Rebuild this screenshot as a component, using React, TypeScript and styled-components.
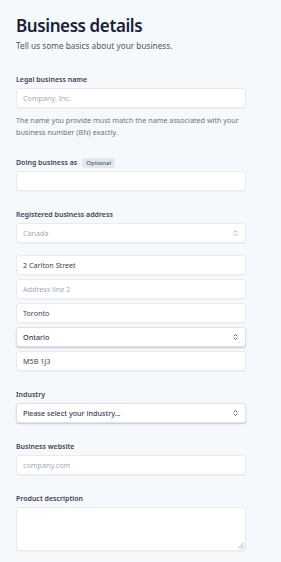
import * as React from 'react';
import styled, { createGlobalStyle } from 'styled-components';

const GlobalStyle = createGlobalStyle`
  html, body {
    margin: 0;
    padding: 0;
    background: #f6f9fc;
  }
  body {
    font-family: 'Noto Sans', 'Open Sans', sans-serif;
  }
`;

const Page = styled.div`
  width: 281px;
  min-height: 562px;
  box-sizing: border-box;
  padding: 14px 35px 0 16px;
  background: #f6f9fc;
`;

const Title = styled.h1`
  margin: 0;
  font-size: 17px;
  line-height: 24px;
  font-weight: 600;
  letter-spacing: -0.4px;
  color: #1a1f36;
`;

const Subtitle = styled.p`
  margin: 2px 0 22px;
  font-size: 8.25px;
  line-height: 12px;
  color: #4f566b;
`;

const Section = styled.div`
  display: flex;
  flex-direction: column;
  margin-bottom: 18px;
`;

const LabelRow = styled.div`
  display: flex;
  align-items: center;
  gap: 5px;
  height: 10px;
  margin: 1px 0 3px;
`;

const Label = styled.label`
  font-size: 7px;
  line-height: 10px;
  font-weight: 600;
  color: #3c4257;
`;

const Badge = styled.span`
  display: inline-flex;
  align-items: center;
  height: 10px;
  padding: 0 4px;
  border-radius: 3px;
  background: #e3e8ee;
  color: #4f566b;
  font-size: 6px;
  font-weight: 500;
`;

const Field = styled.div<{ $raised?: boolean; $gapTop?: number }>`
  display: flex;
  align-items: center;
  height: 20px;
  box-sizing: border-box;
  margin-top: ${p => p.$gapTop ?? 0}px;
  padding: 0 7px 0 6px;
  background: #ffffff;
  border: 1px solid ${p => (p.$raised ? '#dfe3e8' : '#e6ebf1')};
  border-radius: 3px;
  box-shadow: ${p =>
    p.$raised
      ? '0 1px 2px rgba(60, 66, 87, 0.2), 0 1px 1px rgba(0, 0, 0, 0.06)'
      : '0 1px 1px rgba(0, 0, 0, 0.03)'};
`;

const Value = styled.span<{ $muted?: boolean; $strong?: boolean }>`
  flex: 1;
  font-size: 7.2px;
  line-height: 10px;
  color: ${p => (p.$muted ? '#a3acb9' : '#3c4257')};
  font-weight: ${p => (p.$strong ? 500 : 400)};
`;

const TextArea = styled.div`
  position: relative;
  height: 44px;
  box-sizing: border-box;
  background: #ffffff;
  border: 1px solid #e6ebf1;
  border-radius: 3px;
  box-shadow: 0 1px 1px rgba(0, 0, 0, 0.03);
`;

const Grip = styled.svg`
  position: absolute;
  right: 1px;
  bottom: 1px;
`;

const Helper = styled.p`
  margin: 5.5px 0 0;
  font-size: 7.2px;
  line-height: 12.5px;
  color: #697386;
`;

const UpDown = ({ muted }: { muted?: boolean }) => (
  <svg width="5" height="8" viewBox="0 0 5 8" fill="none">
    <path
      d="M1 3 L2.5 1.5 L4 3 M1 5 L2.5 6.5 L4 5"
      stroke={muted ? '#a3acb9' : '#4f566b'}
      strokeWidth="0.9"
      strokeLinecap="round"
      strokeLinejoin="round"
    />
  </svg>
);

const App = () => {
  return (
    <Page>
      <GlobalStyle />
      <Title>Business details</Title>
      <Subtitle>Tell us some basics about your business.</Subtitle>

      <Section>
        <LabelRow>
          <Label>Legal business name</Label>
        </LabelRow>
        <Field>
          <Value $muted>Company, Inc.</Value>
        </Field>
        <Helper>
          The name you provide must match the name associated with your business number (BN) exactly.
        </Helper>
      </Section>

      <Section>
        <LabelRow>
          <Label>Doing business as</Label>
          <Badge>Optional</Badge>
        </LabelRow>
        <Field />
      </Section>

      <Section>
        <LabelRow>
          <Label>Registered business address</Label>
        </LabelRow>
        <Field>
          <Value $muted>Canada</Value>
          <UpDown muted />
        </Field>
        <Field $gapTop={12}>
          <Value>2 Carlton Street</Value>
        </Field>
        <Field $gapTop={4}>
          <Value $muted>Address line 2</Value>
        </Field>
        <Field $gapTop={4}>
          <Value>Toronto</Value>
        </Field>
        <Field $gapTop={4} $raised>
          <Value $strong>Ontario</Value>
          <UpDown />
        </Field>
        <Field $gapTop={4}>
          <Value>M5B 1J3</Value>
        </Field>
      </Section>

      <Section>
        <LabelRow>
          <Label>Industry</Label>
        </LabelRow>
        <Field $raised>
          <Value $strong>Please select your industry...</Value>
          <UpDown />
        </Field>
      </Section>

      <Section>
        <LabelRow>
          <Label>Business website</Label>
        </LabelRow>
        <Field>
          <Value $muted>company.com</Value>
        </Field>
      </Section>

      <Section>
        <LabelRow>
          <Label>Product description</Label>
        </LabelRow>
        <TextArea>
          <Grip width="7" height="7" viewBox="0 0 7 7">
            <path d="M6.5 1 L1 6.5 M6.5 3.5 L3.5 6.5 M6.5 5.5 L5.5 6.5" stroke="#8792a2" strokeWidth="0.7" />
          </Grip>
        </TextArea>
      </Section>
    </Page>
  );
};

export default App;
